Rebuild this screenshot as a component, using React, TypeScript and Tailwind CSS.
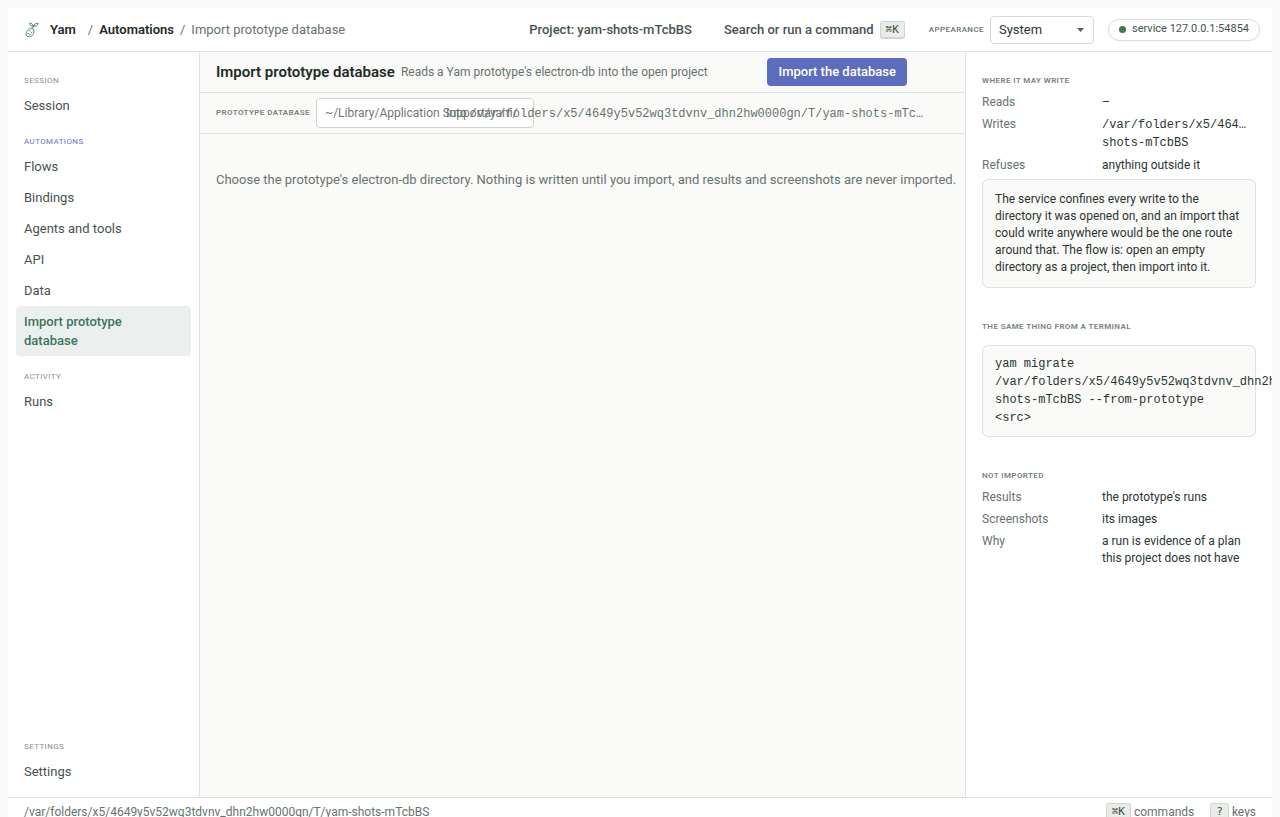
import React, { useState } from 'react';

const PROJECT_PATH = '/var/folders/x5/4649y5v52wq3tdvnv_dhn2hw0000gn/T/yam-shots-mTcbBS';

const navGroups = [
  { label: 'Session', items: ['Session'] },
  {
    label: 'Automations',
    items: ['Flows', 'Bindings', 'Agents and tools', 'API', 'Data', 'Import prototype database'],
  },
  { label: 'Activity', items: ['Runs'] },
];

const YamLogo: React.FC = () => (
  <svg
    className="h-4 w-4 shrink-0 text-[#41806a]"
    viewBox="0 0 16 16"
    fill="none"
    stroke="currentColor"
    strokeWidth="0.9"
    strokeLinecap="round"
    strokeLinejoin="round"
    aria-hidden="true"
  >
    <path d="M8.2 6.2C6.6 5.8 5.4 7 4.2 8C2.4 9.4 1.8 11.4 2.2 13.2C2.6 14.8 5 15 6.6 14.4C8.8 13.6 9.8 12 9.8 10.2C9.8 8.6 10.2 7 8.2 6.2Z" />
    <path d="M8.8 6C9 5 9.2 4.4 9.4 3.8" />
    <path d="M9.4 4C7.4 4.4 5.8 3.4 5.4 1.4C7.4 1 9 2 9.4 4Z" />
    <path d="M9.6 4C9.8 2.2 11.6 1 14.2 1.4C13.8 3.6 12 4.6 9.6 4Z" />
    <path d="M5.8 8.8L6.4 9M7.4 10.8L7.9 10.6M3.8 11.2L4.4 11.4M5.6 12.8L6.2 12.6" />
  </svg>
);

const Kbd: React.FC<{ children: React.ReactNode }> = ({ children }) => (
  <kbd className="inline-flex h-[18px] min-w-[18px] items-center justify-center rounded-[3px] border border-b-2 border-[#cfd6cf] bg-[#e9ece7] px-[5px] font-['DejaVu_Sans_Mono',monospace] text-[11px] leading-none text-[#3f4c47]">
    {children}
  </kbd>
);

const NavGroup: React.FC<{
  label: string;
  items: string[];
  active: string;
  onSelect: (item: string) => void;
}> = ({ label, items, active, onSelect }) => (
  <section>
    <h2
      className={`mb-[3px] px-2 text-[8px] leading-3 tracking-wider uppercase ${
        items.includes(active) ? 'text-[#6573c3]' : 'text-[#89928e]'
      }`}
    >
      {label}
    </h2>
    {items.map((item) => (
      <button
        key={item}
        type="button"
        onClick={() => onSelect(item)}
        className={`block w-full rounded py-1.5 pr-4 pl-2 text-left text-[13px] leading-[19px] ${
          item === active ? 'bg-[#ebf0ee] font-medium text-[#3c7560]' : 'text-[#47534f]'
        }`}
      >
        {item}
      </button>
    ))}
  </section>
);

const PanelHeading: React.FC<{ children: React.ReactNode }> = ({ children }) => (
  <h2 className="text-[8px] leading-3 font-semibold tracking-wider text-[#78827e] uppercase">{children}</h2>
);

const Fact: React.FC<{ term: string; children: React.ReactNode }> = ({ term, children }) => (
  <div className="flex">
    <dt className="w-[120px] shrink-0 text-[#68736f]">{term}</dt>
    <dd className="min-w-0 flex-1 text-[#2a3632]">{children}</dd>
  </div>
);

const App: React.FC = () => {
  const [active, setActive] = useState('Import prototype database');
  const [theme, setTheme] = useState('System');
  const [source, setSource] = useState('');

  return (
    <div className="h-screen overflow-hidden bg-[#fafaf8] px-2 pt-2 font-[Roboto,'Noto_Sans',sans-serif] text-[13px] text-[#2a3632]">
      <div className="flex h-screen flex-col overflow-hidden">
        <header className="flex h-11 shrink-0 items-center border-b border-[#e0e2df] bg-white pr-3 pl-4">
          <a href="#" className="flex items-center gap-2.5 font-semibold text-[#1f2b27]">
            <YamLogo />
            Yam
          </a>
          <nav className="ml-3 flex items-center gap-1.5 text-[#68736f]" aria-label="Breadcrumb">
            <span>/</span>
            <a href="#" className="font-semibold text-[#1f2b27]">Automations</a>
            <span>/</span>
            <span>Import prototype database</span>
          </nav>

          <button type="button" className="ml-auto font-medium text-[#47534f]">
            Project: yam-shots-mTcbBS
          </button>
          <button type="button" className="ml-8 flex items-center gap-1.5 font-medium text-[#47534f]">
            Search or run a command
            <Kbd>⌘K</Kbd>
          </button>
          <label
            htmlFor="appearance"
            className="ml-6 text-[8px] font-medium tracking-wider text-[#68736f] uppercase"
          >
            Appearance
          </label>
          <div className="relative ml-1.5">
            <select
              id="appearance"
              value={theme}
              onChange={(e) => setTheme(e.target.value)}
              className="h-7 w-[104px] appearance-none rounded border border-[#d5dad5] bg-white px-2 text-[13px] text-[#2a3632]"
            >
              <option>System</option>
              <option>Light</option>
              <option>Dark</option>
            </select>
            <svg
              className="pointer-events-none absolute top-3 right-2.5 h-1 w-[7px] text-[#55605c]"
              viewBox="0 0 7 4"
              fill="currentColor"
              aria-hidden="true"
            >
              <path d="M0 0H7L3.5 4Z" />
            </svg>
          </div>
          <span className="ml-3.5 flex h-[22px] items-center gap-1.5 rounded-full border border-[#d9ddd8] px-2.5 text-[11px] text-[#47534f]">
            <span className="h-[7px] w-[7px] rounded-full bg-[#3b7a4b]" />
            service 127.0.0.1:54854
          </span>
        </header>

        <div className="flex min-h-0 flex-1">
          <aside className="flex w-48 shrink-0 flex-col border-r border-[#e0e2df] bg-white px-2 pt-[23px] pb-2.5">
            <div className="flex flex-col gap-[15px]">
              {navGroups.map((group) => (
                <NavGroup key={group.label} {...group} active={active} onSelect={setActive} />
              ))}
            </div>
            <div className="mt-auto">
              <NavGroup label="Settings" items={['Settings']} active={active} onSelect={setActive} />
            </div>
          </aside>

          <main className="min-w-0 flex-1">
            <div className="flex h-[41px] items-center gap-1.5 border-b border-[#e0e2df] pr-[58px] pl-4">
              <h1 className="text-[15px] font-semibold text-[#1f2b27]">Import prototype database</h1>
              <p className="text-xs text-[#68736f]">Reads a Yam prototype's electron-db into the open project</p>
              <button type="button" className="ml-auto h-7 rounded bg-[#5d6dbd] px-[11px] font-medium text-white">
                Import the database
              </button>
            </div>
            <div className="flex h-[41px] items-center gap-2 border-b border-[#e0e2df] px-4">
              <div className="flex w-[222px] shrink-0 items-center gap-1.5">
                <label
                  htmlFor="source"
                  className="shrink-0 text-[8px] font-semibold tracking-wider text-[#78827e] uppercase"
                >
                  Prototype database
                </label>
                <input
                  id="source"
                  value={source}
                  onChange={(e) => setSource(e.target.value)}
                  placeholder="~/Library/Application Support/yam/"
                  className="h-[30px] w-[218px] shrink-0 rounded border border-[#cfd4cc] bg-white px-2 text-xs placeholder:text-[#757575]"
                />
              </div>
              <p className="relative min-w-0 flex-1 truncate text-xs text-[#68736f]">
                Into{' '}
                <code className="font-['Liberation_Mono',monospace]">
                  /var/folders/x5/4649y5v52wq3tdvnv_dhn2hw0000gn/T/yam-shots-mTc…
                </code>
              </p>
            </div>
            <p className="pt-9 pr-1 pl-4 leading-5 text-[#68736f]">
              Choose the prototype's electron-db directory. Nothing is written until you import, and results and
              screenshots are never imported.
            </p>
          </main>

          <aside className="flex w-[307px] shrink-0 flex-col gap-[33px] overflow-hidden border-l border-[#e0e2df] bg-white px-4 pt-[23px] text-xs leading-[17px]">
            <section>
              <PanelHeading>Where it may write</PanelHeading>
              <dl className="mt-[7px] flex flex-col gap-[5px]">
                <Fact term="Reads">–</Fact>
                <Fact term="Writes">
                  <code className="block font-['Liberation_Mono',monospace] leading-[18px]">
                    /var/folders/x5/464…
                    <br />
                    shots-mTcbBS
                  </code>
                </Fact>
                <Fact term="Refuses">anything outside it</Fact>
              </dl>
              <p className="mt-[5px] rounded-md border border-[#e0e2df] bg-[#fafaf8] px-3 py-[11px]">
                The service confines every write to the directory it was opened on, and an import that could write
                anywhere would be the one route around that. The flow is: open an empty directory as a project, then
                import into it.
              </p>
            </section>

            <section>
              <PanelHeading>The same thing from a terminal</PanelHeading>
              <pre className="mt-3 rounded-md border border-[#e0e2df] bg-[#fafaf8] px-3 py-[9px] font-['Liberation_Mono',monospace] leading-[18px]">
                {`yam migrate\n/var/folders/x5/4649y5v52wq3tdvnv_dhn2hw0000gn/T/yam-\nshots-mTcbBS --from-prototype\n<src>`}
              </pre>
            </section>

            <section>
              <PanelHeading>Not imported</PanelHeading>
              <dl className="mt-[7px] flex flex-col gap-[5px]">
                <Fact term="Results">the prototype's runs</Fact>
                <Fact term="Screenshots">its images</Fact>
                <Fact term="Why">a run is evidence of a plan this project does not have</Fact>
              </dl>
            </section>
          </aside>
        </div>

        <footer className="flex h-7 shrink-0 items-center gap-4 border-t border-[#e0e2df] bg-white px-4 text-xs text-[#68736f]">
          <span className="mr-auto">{PROJECT_PATH}</span>
          <span className="flex items-center gap-[3px]">
            <Kbd>⌘K</Kbd> commands
          </span>
          <span className="flex items-center gap-[3px]">
            <Kbd>?</Kbd> keys
          </span>
        </footer>
      </div>
    </div>
  );
};

export default App;
